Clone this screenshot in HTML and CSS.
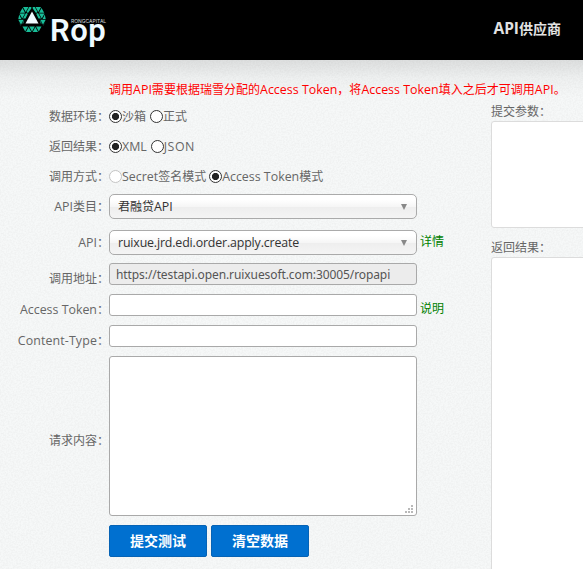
FILE: index.html
```html
<!DOCTYPE html>
<html lang="zh-CN">
<head>
<meta charset="utf-8">
<title>API</title>
<link rel="stylesheet" href="styles.css">
</head>
<body>
<header class="topbar">
  <div class="logo">
    <svg class="logo-mark" width="28" height="25" viewBox="0 0 28 25" aria-hidden="true">
      <g fill="#18bd98">
        <path d="M5 0H10.500L7.700 5ZM11.200 0H13.300V1.500L10 6L8.500 5ZM4.500 1L7 5.800H1.800ZM1.500 6.600H7L4.200 11.400ZM8 6L9.800 6.800L7.500 11.600L5 11.500ZM3.400 12H.3L1.200 7.500ZM.3 12.800H5.600L3 17.800ZM6.400 12.500L4.500 16L5 17ZM.5 14.500L2.500 18.600L3 19Z"/>
        <path d="M23 0H17.500L20.300 5ZM16.800 0H14.700V1.500L18 6L19.500 5ZM23.500 1L21 5.800H26.200ZM26.500 6.600H21L23.800 11.400ZM20 6L18.200 6.800L20.500 11.600L23 11.500ZM24.600 12H27.700L26.800 7.500ZM27.700 12.800H22.400L25 17.800ZM21.600 12.500L23.500 16L23 17ZM27.500 14.500L25.500 18.600L25 19Z"/>
        <path d="M4.500 19.500H10L7.200 24.500ZM11.200 19.500H16.800L14 24.500ZM18 19.500H23.500L20.800 24.500ZM10.600 20L13.300 25H8ZM17.400 20L20 25H14.700Z"/>
      </g>
      <path fill="#effaff" d="M14 4.500L20.500 16.500H7.500Z"/>
    </svg>
    <div class="logo-text"><span class="logo-sub">RONGCAPITAL</span><span class="logo-name">Rop</span></div>
  </div>
  <nav><a class="nav-link"><span class="nav-lat">API</span>供应商</a></nav>
</header>
<main class="page">
  <form class="form">
    <p class="notice">调用<span class="lat">API</span>需要根据瑞雪分配的<span class="lat">Access Token</span>，将<span class="lat">Access Token</span>填入之后才可调用<span class="lat">API</span>。</p>
    <div class="row radios"><label class="name">数据环境：</label><i class="radio on"></i>沙箱<i class="radio gap"></i>正式</div>
    <div class="row radios"><label class="name">返回结果：</label><i class="radio on"></i><span class="lat">XML</span><i class="radio gap"></i><span class="lat json">JSON</span></div>
    <div class="row radios"><label class="name">调用方式：</label><i class="radio off"></i><span class="lat">Secret</span>签名模式<i class="radio on tight"></i><span class="lat">Access Token</span>模式</div>
    <div class="row pick"><label class="name"><span class="lat">API</span>类目：</label><div class="select"><span>君融贷<span class="lat">API</span></span></div></div>
    <div class="row pick second"><label class="name"><span class="lat">API</span>：</label><div class="select"><span class="lat value">ruixue.jrd.edi.order.apply.create</span></div><a class="link up">详情</a></div>
    <div class="row field"><label class="name low">调用地址：</label><input class="box url" readonly value="https://testapi.open.ruixuesoft.com:30005/ropapi"></div>
    <div class="row field"><label class="name low"><span class="lat">Access Token</span>：</label><input class="box"><a class="link down">说明</a></div>
    <div class="row field"><label class="name low"><span class="lat wide">Content-Type</span>：</label><input class="box"></div>
    <div class="row content"><label class="name shifted">请求内容：</label><div class="area-wrap"><textarea class="box area"></textarea><svg class="grip" width="8" height="8" viewBox="0 0 8 8"><path fill="#b9b9b9" d="M6 0h2v2H6zM3 3h2v2H3zM6 3h2v2H6zM0 6h2v2H0zM3 6h2v2H3zM6 6h2v2H6z"/></svg></div></div>
    <div class="actions"><button type="button" class="btn">提交测试</button><button type="button" class="btn">清空数据</button></div>
  </form>
  <section class="results">
    <div class="caption">提交参数：</div>
    <div class="panel params"></div>
    <div class="caption second-cap">返回结果：</div>
    <div class="panel output"></div>
  </section>
</main>
</body>
</html>
```
FILE: styles.css
```css
* { box-sizing: border-box; }
body {
  margin: 0;
  height: 569px;
  overflow: hidden;
  font: 12px/20px "Open Sans", "Noto Sans CJK SC", sans-serif;
  color: #666;
  background-color: #f2f4f4;
}
.lat { font-size: 12.4px; }
.lat.value { letter-spacing: -.16px; }
.lat.wide { letter-spacing: .12px; }
.lat.json { letter-spacing: .5px; }
.topbar {
  height: 60px;
  background: #000;
  display: flex;
  justify-content: space-between;
  padding: 0 22px 0 18px;
}
.logo { display: flex; }
.logo-mark { margin-top: 7px; }
.logo-text { margin-left: 3px; padding-top: 18px; }
.logo-sub {
  display: block;
  height: 6px;
  margin-left: 22px;
  font: 5px/6px Inter, sans-serif;
  color: #cdd6da;
}
.logo-name {
  display: block;
  margin: -9px 0 0 1px;
  width: 58px;
  font: 600 31px/32px Roboto, sans-serif;
  letter-spacing: .5px;
  color: #effaff;
}
.nav-link {
  display: block;
  font-size: 14px;
  font-weight: 700;
  line-height: 56px;
  color: #e2e2e2;
}
.nav-lat { font-size: 15.5px; }
.page {
  display: flex;
  height: 509px;
  background:
    linear-gradient(rgba(0,0,0,.10), rgba(0,0,0,.03) 18px, rgba(0,0,0,0) 38px),
    url("data:image/svg+xml,%3Csvg xmlns='http://www.w3.org/2000/svg' width='200' height='200'%3E%3Cfilter id='n'%3E%3CfeTurbulence type='fractalNoise' baseFrequency='.6' numOctaves='2' stitchTiles='stitch'/%3E%3CfeColorMatrix values='0 0 0 0 .4 0 0 0 0 .4 0 0 0 0 .4 .22 0 0 0 -.08'/%3E%3C/filter%3E%3Crect width='200' height='200' filter='url(%23n)'/%3E%3C/svg%3E"),
    #f6f8f8;
}
.form { flex: 0 0 491px; min-width: 0; width: 491px; padding-top: 20px; }
.notice { margin: 0 0 7px 109px; width: 382px; line-height: 20px; color: #f00; white-space: nowrap; letter-spacing: .02px; }
.row { display: flex; }
.name { flex: 0 0 109px; text-align: right; white-space: nowrap; }
.radios { height: 20px; margin-bottom: 10px; align-items: center; white-space: nowrap; }
.radio {
  flex: none;
  width: 13px;
  height: 13px;
  margin-top: -1px;
  border: 1px solid #333;
  border-radius: 50%;
  background: #fff;
}
.radio.on { background: radial-gradient(circle, #222 3.2px, #fff 4px); }
.radio.off { border-color: #c4c4c4; }
.radio.gap { margin-left: 4px; }
.radio.tight { margin-left: 3px; }
.pick { align-items: center; height: 25px; margin-top: -3px; }
.pick.second { margin: 11px 0 8px; }
.select {
  width: 308px;
  height: 25px;
  padding: 0 9px 0 8px;
  display: flex;
  align-items: center;
  justify-content: space-between;
  border: 1px solid #aaa;
  border-radius: 5px;
  color: #333;
  background: linear-gradient(#fff 20%, #f6f6f6 50%, #eee 52%, #f4f4f4);
}
.select::after {
  content: "";
  border: solid transparent;
  border-width: 6px 3.5px 0;
  border-top-color: #888;
}
.link { color: #008000; margin-left: 3px; }
.link.up { margin-bottom: 2px; }
.link.down { margin-top: 5px; }
.field { height: 22px; margin-bottom: 9px; }
.name.low { padding-top: 6px; }
.name.shifted { padding-top: 10px; }
.box {
  width: 308px;
  height: 22px;
  margin: 0;
  padding: 0 6px;
  border: 1px solid #a9a9a9;
  border-radius: 3px;
  background: #fff;
  font: 12px/20px "Noto Sans", sans-serif;
  color: #555;
  outline: 0;
}
.url { background: #ececec; letter-spacing: -.09px; }
.content { height: 160px; margin-bottom: 9px; align-items: center; }
.area-wrap { position: relative; height: 160px; }
.area { display: block; height: 160px; resize: none; }
.grip { position: absolute; right: 4px; bottom: 3px; }
.actions { display: flex; gap: 4px; margin-left: 109px; }
.btn {
  width: 98px;
  height: 32px;
  padding: 0 0 2px;
  border: 1px solid #0663b5;
  border-radius: 2px;
  background: #0070d0;
  color: #fff;
  font: 700 14px/28px "Noto Sans CJK SC", sans-serif;
}
.results { flex: 1; min-width: 0; padding-top: 42px; overflow: hidden; }
.caption { height: 20px; white-space: nowrap; }
.second-cap { margin-top: 10px; }
.panel {
  width: 300px;
  border: 1px solid #dcdcdc;
  border-radius: 3px;
  background: #fff;
}
.params { height: 107px; margin-top: -1px; }
.output { height: 330px; margin-top: -1px; }
```
